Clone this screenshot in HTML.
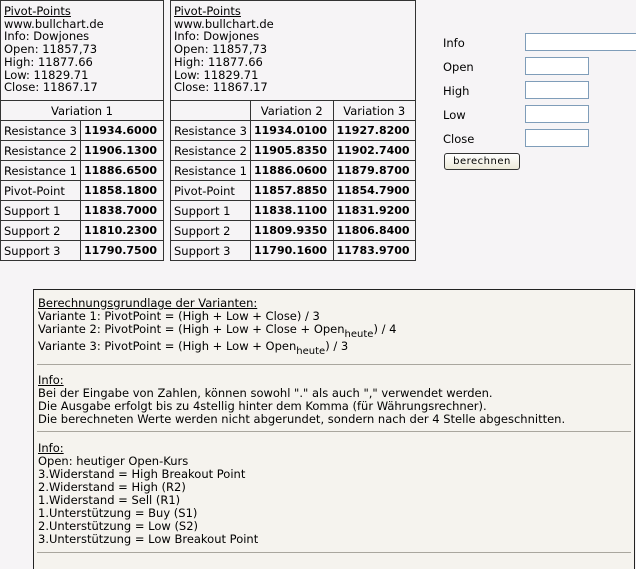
<!DOCTYPE html>
<html><head><meta charset="utf-8"><style>
*{margin:0;padding:0;box-sizing:border-box}
body{width:636px;height:554px;overflow:hidden;background:#f6f4f6;font-family:"DejaVu Sans",Verdana,sans-serif;font-size:11.5px;color:#000;position:relative}
.a{position:absolute}
table{border-collapse:collapse;position:absolute;font-size:11.5px}
td{border:1px solid #333;height:20px;padding:0 3px;white-space:nowrap}
td.b{font-weight:bold;font-size:11px}
.info{height:100px;vertical-align:top;line-height:12.7px;padding:4px 3px}
.c{text-align:center}
u{text-decoration:underline}
input{position:absolute;background:#fff;border:1px solid #7f9db9;height:18px}
.lbl{position:absolute;left:443px}
.box{position:absolute;left:33px;top:289px;width:602px;height:280px;background:#f5f3ee;border:1px solid #222;border-bottom:none}
.box p{line-height:13px;padding-left:4px}
.rule{height:2px;border-top:1px solid #a9a69e;margin:0 3px 0 3px}
sub{font-size:10px;vertical-align:-4px;line-height:0}
</style></head><body>
<table style="left:0;top:0;width:164px">
<tr><td colspan="2" class="info"><u>Pivot-Points</u><br>www.bullchart.de<br>Info: Dowjones<br>Open: 11857,73<br>High: 11877.66<br>Low: 11829.71<br>Close: 11867.17</td></tr>
<tr><td colspan="2" class="c">Variation 1</td></tr>
<tr><td style="width:79px">Resistance 3</td><td class="b">11934.6000</td></tr>
<tr><td>Resistance 2</td><td class="b">11906.1300</td></tr>
<tr><td>Resistance 1</td><td class="b">11886.6500</td></tr>
<tr><td>Pivot-Point</td><td class="b">11858.1800</td></tr>
<tr><td>Support 1</td><td class="b">11838.7000</td></tr>
<tr><td>Support 2</td><td class="b">11810.2300</td></tr>
<tr><td>Support 3</td><td class="b">11790.7500</td></tr>
</table>
<table style="left:170px;top:0;width:246px">
<tr><td colspan="3" class="info"><u>Pivot-Points</u><br>www.bullchart.de<br>Info: Dowjones<br>Open: 11857,73<br>High: 11877.66<br>Low: 11829.71<br>Close: 11867.17</td></tr>
<tr><td></td><td class="c">Variation 2</td><td class="c">Variation 3</td></tr>
<tr><td style="width:80px">Resistance 3</td><td class="b">11934.0100</td><td class="b">11927.8200</td></tr>
<tr><td>Resistance 2</td><td class="b">11905.8350</td><td class="b">11902.7400</td></tr>
<tr><td>Resistance 1</td><td class="b">11886.0600</td><td class="b">11879.8700</td></tr>
<tr><td>Pivot-Point</td><td class="b">11857.8850</td><td class="b">11854.7900</td></tr>
<tr><td>Support 1</td><td class="b">11838.1100</td><td class="b">11831.9200</td></tr>
<tr><td>Support 2</td><td class="b">11809.9350</td><td class="b">11806.8400</td></tr>
<tr><td>Support 3</td><td class="b">11790.1600</td><td class="b">11783.9700</td></tr>
</table>
<div class="lbl" style="top:36px">Info</div>
<div class="lbl" style="top:60px">Open</div>
<div class="lbl" style="top:84px">High</div>
<div class="lbl" style="top:108px">Low</div>
<div class="lbl" style="top:132px">Close</div>
<input style="left:525px;top:33px;width:115px">
<input style="left:525px;top:57px;width:64px">
<input style="left:525px;top:81px;width:64px">
<input style="left:525px;top:105px;width:64px">
<input style="left:525px;top:129px;width:64px">
<div class="a" style="left:444px;top:153px;width:76px;height:17px;border:1px solid #333;border-radius:3px;background:linear-gradient(#fff,#ece9d8);font-size:10px;text-align:center;line-height:15px;letter-spacing:0.5px">berechnen</div>
<div class="box">
<div style="height:7px"></div>
<p><u>Berechnungsgrundlage der Varianten:</u><br>Variante 1: PivotPoint = (High + Low + Close) / 3<br>Variante 2: PivotPoint = (High + Low + Close + Open<sub>heute</sub>) / 4</p>
<p style="margin-top:4px">Variante 3: PivotPoint = (High + Low + Open<sub>heute</sub>) / 3</p>
<div style="height:11px"></div>
<div class="rule"></div>
<div style="height:8px"></div>
<p><u>Info:</u><br>Bei der Eingabe von Zahlen, können sowohl "." als auch "," verwendet werden.<br>Die Ausgabe erfolgt bis zu 4stellig hinter dem Komma (für Währungsrechner).<br>Die berechneten Werte werden nicht abgerundet, sondern nach der 4 Stelle abgeschnitten.</p>
<div style="height:5px"></div>
<div class="rule"></div>
<div style="height:9px"></div>
<p><u>Info:</u><br>Open: heutiger Open-Kurs<br>3.Widerstand = High Breakout Point<br>2.Widerstand = High (R2)<br>1.Widerstand = Sell (R1)<br>1.Unterstützung = Buy (S1)<br>2.Unterstützung = Low (S2)<br>3.Unterstützung = Low Breakout Point</p>
<div style="height:6px"></div>
<div class="rule"></div>
</div>
</body></html>
